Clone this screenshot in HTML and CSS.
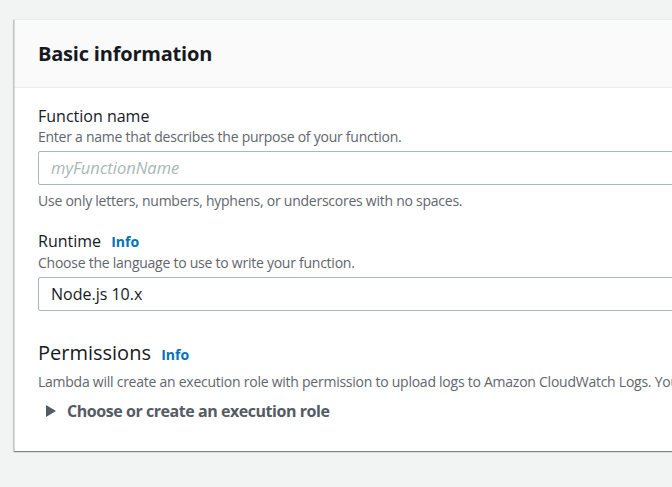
FILE: index.html
```html
<!DOCTYPE html>
<html>
<head>
<meta charset="utf-8">
<link rel="stylesheet" href="styles.css">
</head>
<body>
<div class="page">
  <section class="card">
    <header class="card-head">
      <h2 class="title">Basic information</h2>
    </header>
    <div class="card-body">
      <div class="field">
        <label class="label">Function name</label>
        <div class="desc">Enter a name that describes the purpose of your function.</div>
        <div class="input placeholder">myFunctionName</div>
        <div class="hint">Use only letters, numbers, hyphens, or underscores with no spaces.</div>
      </div>
      <div class="field runtime">
        <label class="label">Runtime <a class="info">Info</a></label>
        <div class="desc">Choose the language to use to write your function.</div>
        <div class="input value">Node.js 10.x</div>
      </div>
      <div class="perm">
        <h3 class="perm-title">Permissions <a class="info">Info</a></h3>
        <div class="desc nowrap">Lambda will create an execution role with permission to upload logs to Amazon CloudWatch Logs. You can configure and modify permissions further.</div>
        <div class="expander">
          <svg class="caret" width="10" height="12" viewBox="0 0 10 12"><path d="M0 0 L10 6 L0 12 Z" fill="#545b64"/></svg>
          <span>Choose or create an execution role</span>
        </div>
      </div>
    </div>
  </section>
</div>
</body>
</html>
```
FILE: styles.css
```css
html, body { margin: 0; padding: 0; }
body {
  background: #f2f3f3;
  font-family: "Open Sans", "Noto Sans", sans-serif;
  color: #16191f;
  width: 672px;
  height: 487px;
  overflow: hidden;
}
.page { padding: 19px 0 0 14px; }
.card {
  width: 760px;
  background: #fff;
  border-left: 1px solid #d5dbdb;
  border-top: 1px solid #eaeded;
  box-shadow: 0 1px 1px 0 rgba(0,28,36,.3), 1px 1px 1px 0 rgba(0,28,36,.15), -1px 1px 1px 0 rgba(0,28,36,.15);
}
.card-head {
  background: #fafafa;
  border-bottom: 1px solid #eaeded;
  height: 67px;
  display: flex;
  align-items: center;
  padding-left: 23px;
}
.title { margin: 0; font-size: 20px; font-weight: 700; letter-spacing: -0.2px; }
.card-body { padding: 17px 0 29px 23px; }
.label { display: block; font-size: 16px; line-height: 22px; }
.desc { font-size: 14px; line-height: 20px; color: #5f666d; letter-spacing: -0.25px; }
.nowrap { white-space: nowrap; }
.hint { font-size: 14px; line-height: 20px; color: #5f666d; letter-spacing: -0.25px; margin-top: 6px; }
.input {
  margin-top: 4px;
  height: 32px;
  border: 1px solid #aab7b8;
  border-radius: 2px;
  font-size: 16px;
  line-height: 32px;
  padding-left: 12px;
}
.placeholder { color: #aab7b8; font-style: italic; font-size: 16.5px; }
.value { color: #16191f; }
.runtime { margin-top: 19px; }
.info { color: #0073bb; font-size: 14px; font-weight: 700; margin-left: 6px; }
.perm { margin-top: 28px; }
.perm-title { margin: 0; font-size: 20px; font-weight: 400; line-height: 28px; }
.perm .info { margin-left: 5px; }
.perm .desc { margin-top: 3px; }
.expander { display: flex; align-items: center; gap: 11px; margin-top: 8px; padding-left: 8px; font-size: 16px; font-weight: 700; color: #545b64; letter-spacing: -0.45px; }
```
